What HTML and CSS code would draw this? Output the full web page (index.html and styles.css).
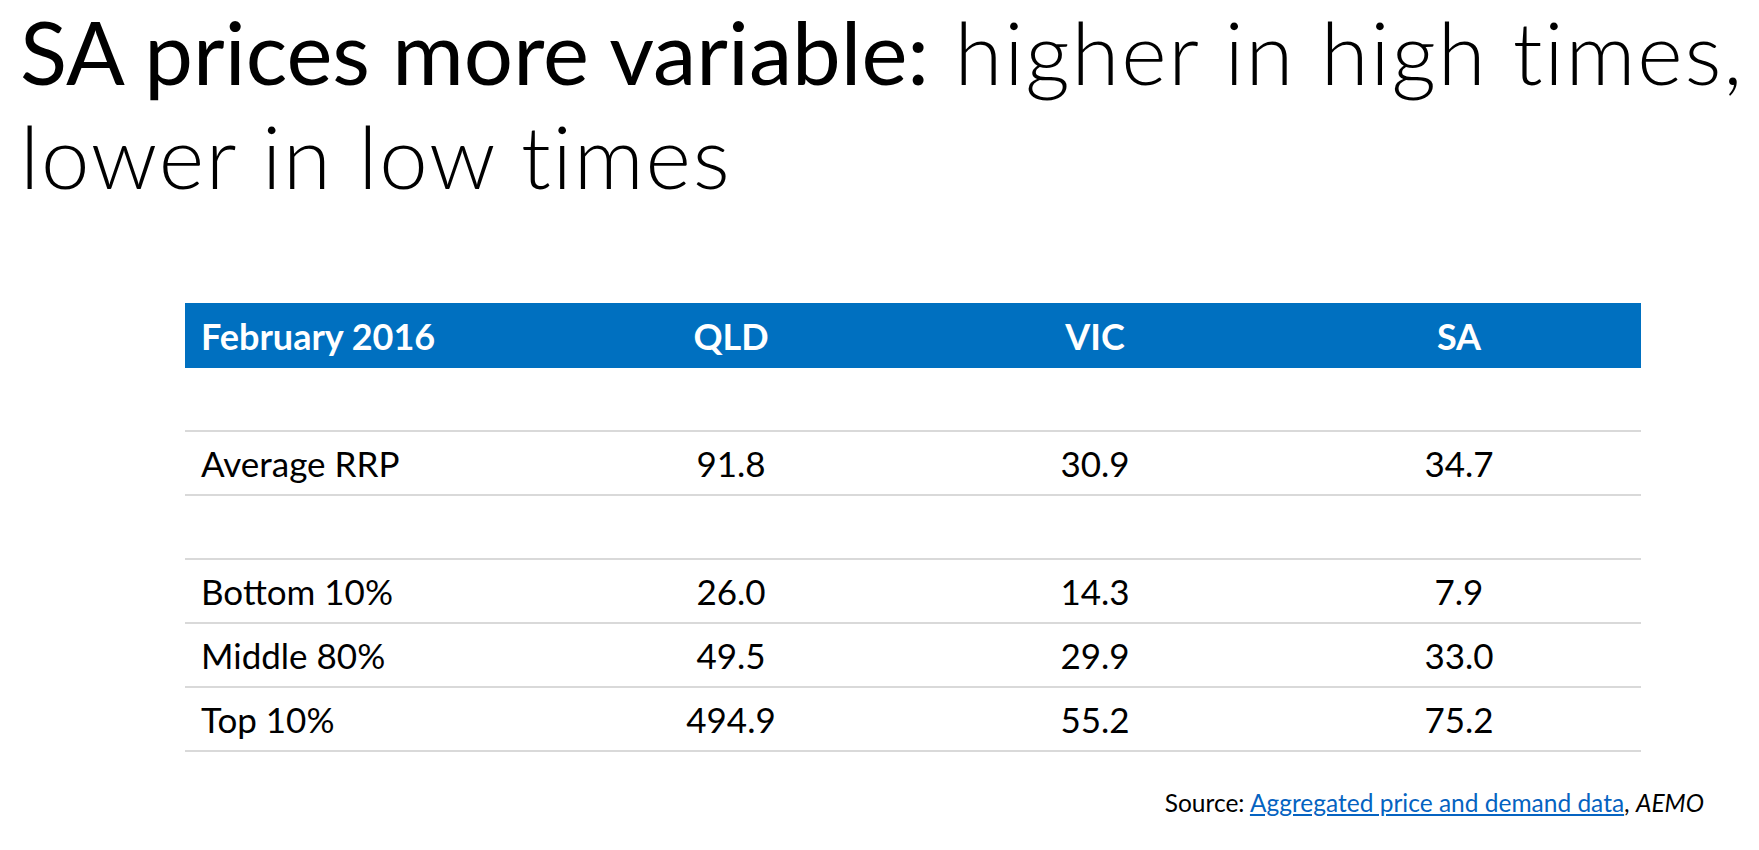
FILE: index.html
```html
<!DOCTYPE html>
<html lang="en">
<head>
<meta charset="utf-8">
<title>SA prices more variable</title>
<link rel="stylesheet" href="styles.css">
</head>
<body>
<div class="slide">
  <h1 class="title">
    <span class="title-line"><span class="title-strong">SA prices more variable:</span><span class="title-light"> higher in high times,</span></span>
    <span class="title-line title-light">lower in low times</span>
  </h1>
  <div class="table">
    <div class="row head">
      <div class="cell first">February 2016</div>
      <div class="cell">QLD</div>
      <div class="cell">VIC</div>
      <div class="cell">SA</div>
    </div>
    <div class="row spacer"></div>
    <div class="row">
      <div class="cell first">Average RRP</div>
      <div class="cell">91.8</div>
      <div class="cell">30.9</div>
      <div class="cell">34.7</div>
    </div>
    <div class="row spacer"></div>
    <div class="row">
      <div class="cell first">Bottom 10%</div>
      <div class="cell">26.0</div>
      <div class="cell">14.3</div>
      <div class="cell">7.9</div>
    </div>
    <div class="row">
      <div class="cell first">Middle 80%</div>
      <div class="cell">49.5</div>
      <div class="cell">29.9</div>
      <div class="cell">33.0</div>
    </div>
    <div class="row">
      <div class="cell first">Top 10%</div>
      <div class="cell">494.9</div>
      <div class="cell">55.2</div>
      <div class="cell">75.2</div>
    </div>
  </div>
  <p class="source">Source: <a class="link" href="#">Aggregated price and demand data</a>, <em>AEMO</em></p>
</div>
</body>
</html>
```
FILE: styles.css
```css
html, body {
  margin: 0;
  padding: 0;
  background: #ffffff;
}
body {
  font-family: Lato, "Open Sans", "Liberation Sans", sans-serif;
  color: #000000;
}
.slide {
  width: 1759px;
  height: 850px;
  position: relative;
  overflow: hidden;
}
.title {
  margin: 0;
  padding: 0 0 0 20px;
  width: 1739px;
  font-size: 87px;
  line-height: 104px;
  font-weight: 300;
  display: flex;
  flex-direction: column;
  align-items: flex-start;
}
.title-line {
  display: block;
  white-space: nowrap;
}
.title-light {
  font-weight: 300;
  letter-spacing: 1.8px;
}
.title-strong {
  font-weight: 400;
  letter-spacing: 0;
}
.table {
  margin: 95px 0 0 185px;
  width: 1456px;
  display: flex;
  flex-direction: column;
}
.row {
  display: grid;
  grid-template-columns: repeat(4, 1fr);
  height: 64px;
  box-sizing: border-box;
  border-bottom: 2px solid #d9d9d9;
  font-size: 35px;
}
.row.head {
  height: 65px;
  background: #0070c0;
  color: #ffffff;
  font-weight: 700;
  font-size: 36px;
  border-bottom: none;
}
.cell {
  display: flex;
  align-items: center;
  justify-content: center;
}
.cell.first {
  justify-content: flex-start;
  padding-left: 16px;
}
.source {
  margin: 36px 55px 0 0;
  text-align: right;
  font-size: 24.5px;
}
.link {
  color: #0563c1;
  text-decoration: underline;
}
.source em {
  font-style: italic;
}
```
